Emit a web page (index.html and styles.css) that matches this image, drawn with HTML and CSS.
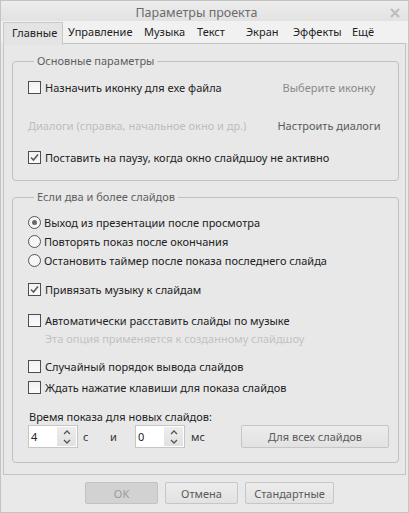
FILE: index.html
```html
<!DOCTYPE html>
<html lang="ru">
<head>
<meta charset="utf-8">
<link rel="stylesheet" href="styles.css">
</head>
<body>
<div class="window">
  <div class="titlebar">
    <span class="title">Параметры проекта</span>
    <svg class="close" width="10" height="10" viewBox="0 0 10 10"><path d="M1 1L9 9M9 1L1 9" stroke="#bdbdbd" stroke-width="2.2"/></svg>
  </div>
  <div class="tabs">
    <div class="tab active w1">Главные</div>
    <div class="tab w2">Управление</div>
    <div class="tab w3">Музыка</div>
    <div class="tab w4">Текст</div>
    <div class="tab w5">Экран</div>
    <div class="tab w6">Эффекты</div>
    <div class="tab w7">Ещё</div>
  </div>
  <div class="panel">
    <div class="group g1">
      <div class="legend">Основные параметры</div>
      <div class="row line mt10">
        <span class="check"><span class="box"></span>Назначить иконку для exe файла</span>
        <span class="link dim">Выберите иконку</span>
      </div>
      <div class="row line mt20">
        <span class="disabled">Диалоги (справка, начальное окно и др.)</span>
        <span class="link">Настроить диалоги</span>
      </div>
      <div class="row mt14">
        <span class="check"><span class="box checked"><svg width="11" height="11" viewBox="0 0 11 11"><path d="M2 5.5L4.5 8L9 2.5" fill="none" stroke="#5a5a5a" stroke-width="1.6"/></svg></span>Поставить на паузу, когда окно слайдшоу не активно</span>
      </div>
    </div>
    <div class="group g2">
      <div class="legend">Если два и более слайдов</div>
      <div class="row mt9"><span class="check"><span class="radio on"></span>Выход из презентации после просмотра</span></div>
      <div class="row mt1"><span class="check"><span class="radio"></span>Повторять показ после окончания</span></div>
      <div class="row mt1"><span class="check"><span class="radio"></span>Остановить таймер после показа последнего слайда</span></div>
      <div class="row mt11"><span class="check"><span class="box checked"><svg width="11" height="11" viewBox="0 0 11 11"><path d="M2 5.5L4.5 8L9 2.5" fill="none" stroke="#5a5a5a" stroke-width="1.6"/></svg></span>Привязать музыку к слайдам</span></div>
      <div class="row mt13"><span class="check"><span class="box"></span>Автоматически расставить слайды по музыке</span></div>
      <div class="row hint">Эта опция применяется к созданному слайдшоу</div>
      <div class="row mt10"><span class="check"><span class="box"></span>Случайный порядок вывода слайдов</span></div>
      <div class="row mt3"><span class="check"><span class="box"></span>Ждать нажатие клавиши для показа слайдов</span></div>
      <div class="row mt11 plain">Время показа для новых слайдов:</div>
      <div class="spinrow">
        <div class="spin"><span class="val">4</span><span class="arrows"><svg width="8" height="5" viewBox="0 0 8 5"><path d="M1 4L4 1L7 4" fill="none" stroke="#555" stroke-width="1.3"/></svg><svg width="8" height="5" viewBox="0 0 8 5"><path d="M1 1L4 4L7 1" fill="none" stroke="#555" stroke-width="1.3"/></svg></span></div>
        <span class="unit u1">с</span>
        <span class="unit u2">и</span>
        <div class="spin"><span class="val">0</span><span class="arrows"><svg width="8" height="5" viewBox="0 0 8 5"><path d="M1 4L4 1L7 4" fill="none" stroke="#555" stroke-width="1.3"/></svg><svg width="8" height="5" viewBox="0 0 8 5"><path d="M1 1L4 4L7 1" fill="none" stroke="#555" stroke-width="1.3"/></svg></span></div>
        <span class="unit u3">мс</span>
        <button class="btn all">Для всех слайдов</button>
      </div>
    </div>
  </div>
  <div class="footer">
    <button class="btn ok">OK</button>
    <button class="btn cancel">Отмена</button>
    <button class="btn std">Стандартные</button>
  </div>
</div>
</body>
</html>
```
FILE: styles.css
```css
* { box-sizing: border-box; }
html, body { margin: 0; padding: 0; background: #e9e9e9; }
body { font-family: "Noto Sans", "Open Sans", sans-serif; font-size: 11px; color: #222; }
.window {
  width: 409px; height: 513px;
  border: 1px solid #c4c4c4;
  background: #e9e9e9;
  display: flex; flex-direction: column;
}
.titlebar {
  height: 20px; flex: none;
  background: linear-gradient(#ececec, #e2e2e2);
  display: flex; align-items: center; justify-content: center;
  position: relative;
}
.title { color: #6b6b6b; font-size: 12.5px; margin-left: -16px; margin-top: 2px; }
.close { position: absolute; right: 8px; top: 7px; }
.tabs {
  height: 22px; flex: none;
  background: #f1f1f1;
  display: flex; padding-left: 2px;
}
.tab { height: 22px; line-height: 22px; padding-left: 5px; white-space: nowrap; color: #222; }
.tab.active {
  padding-left: 8px;
  background: #e4e4e4;
  border: 1px solid #c9c9c9; border-bottom: none;
  margin-top: 1px; line-height: 20px;
  height: 23px; position: relative; z-index: 1;
}
.w1 { width: 60px; } .w2 { width: 76px; } .w3 { width: 53px; } .w4 { width: 49px; }
.w5 { width: 47px; } .w6 { width: 59px; } .w7 { width: 33px; }
.panel {
  flex: 1;
  margin: 0 2px;
  border: 1px solid #c3c3c3;
  padding: 17px 6px 0 8px;
  background: #e8e8e8;
}
.group {
  border: 1px solid #c0c0c0;
  border-radius: 4px;
  padding: 0 8px 14px 15px;
}
.g2 { margin-top: 16px; }
.legend {
  display: table;
  margin: -8px 0 0 6px;
  padding: 0 3px;
  height: 14px; line-height: 14px;
  background: #e8e8e8;
  color: #5e5e5e;
}
.row { height: 18px; display: flex; align-items: center; white-space: nowrap; }
.line { display: grid; grid-template-columns: 246px 110px; }
.line .link { text-align: center; }
.link { color: #5a5a5a; }
.link.dim { color: #8a8a8a; }
.disabled { color: #bdbdbd; }
.hint { color: #c2c2c2; padding-left: 17px; }
.plain { padding-left: 1px; }
.check { display: flex; align-items: center; }
.box {
  width: 13px; height: 13px; flex: none;
  border: 1px solid #4d4d4d;
  background: linear-gradient(#f2f2f2, #fbfbfb);
  margin-right: 4px;
  display: flex; align-items: center; justify-content: center;
}
.radio {
  width: 13px; height: 13px; flex: none;
  border: 1px solid #555;
  border-radius: 50%;
  background: #f6f6f6;
  margin-right: 3px;
  display: flex; align-items: center; justify-content: center;
}
.radio.on::after { content: ""; width: 5px; height: 5px; border-radius: 50%; background: #6a6a6a; }
.mt1 { margin-top: 1px; } .mt3 { margin-top: 3px; } .mt9 { margin-top: 9px; }
.mt10 { margin-top: 10px; } .mt11 { margin-top: 11px; } .mt13 { margin-top: 13px; }
.mt14 { margin-top: 14px; } .mt20 { margin-top: 20px; }
.spinrow { display: flex; align-items: center; height: 23px; }
.spin {
  width: 50px; height: 23px; flex: none;
  border: 1px solid #c6c6c6; background: #fff;
  display: flex;
}
.val { flex: 1; padding-left: 2px; line-height: 21px; }
.arrows {
  width: 19px; margin: 1px 1px 1px 0;
  background: linear-gradient(#ededed, #e1e1e1);
  display: flex; flex-direction: column; align-items: center; justify-content: center; gap: 4px;
}
.unit { flex: none; color: #333; }
.u1 { width: 32px; padding-left: 5px; }
.u2 { width: 25px; }
.u3 { width: 56px; padding-left: 6px; }
.btn {
  font: inherit; color: #5a5a5a;
  border: 1px solid #c6c6c6; border-radius: 2px;
  background: linear-gradient(#ececec, #e2e2e2);
  padding: 0; height: 22px;
}
.all { width: 148px; height: 23px; }
.footer { height: 37px; flex: none; display: flex; gap: 7px; padding: 7px 0 0 84px; }
.ok { width: 73px; background: #d2d2d2; color: #9a9a9a; border-color: #c2c2c2; }
.cancel { width: 73px; }
.std { width: 89px; }
```
